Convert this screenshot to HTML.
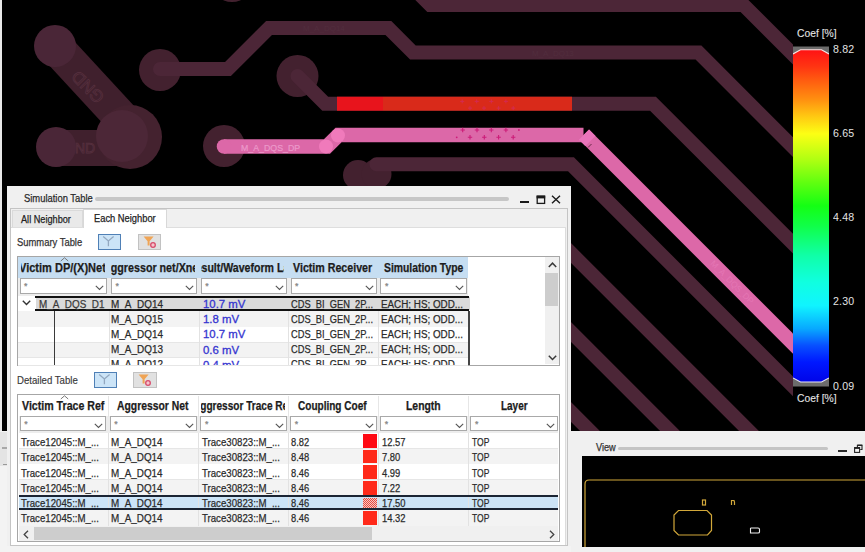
<!DOCTYPE html>
<html><head><meta charset="utf-8">
<style>
*{box-sizing:border-box;margin:0;padding:0}
html,body{width:865px;height:552px;overflow:hidden;background:#000}
body{position:relative;font-family:"Liberation Sans",sans-serif;color:#2a2a2a}
.a{position:absolute}
svg{position:absolute;left:0;top:0}
.t{line-height:1;white-space:nowrap;transform-origin:0 0;-webkit-text-stroke:0.25px currentColor}
.cb{color:#e4e4e4}
.hd{font-weight:bold;color:#1c1c1c}
.clip{position:absolute;overflow:hidden}
</style></head><body>
<svg width="865" height="552" viewBox="0 0 865 552">
<defs><clipPath id="pc"><rect x="0" y="0" width="793" height="431"/></clipPath></defs>
<g clip-path="url(#pc)">
 <g fill="none" stroke="#40202d">
  <path d="M55 46 L127 124" stroke-width="35"/>
  <path d="M56 148 L129 148" stroke-width="36"/>
 </g>
 <text x="64" y="153" font-family="Liberation Sans" font-size="14" fill="none" stroke="#57303f" stroke-width="0.75">GND</text>
 <circle cx="130" cy="137" r="32" fill="#44222f"/>
 <circle cx="122" cy="136" r="26" fill="#4c2737"/>
 <g fill="#4a2637">
  <circle cx="55" cy="46" r="21"/>
  <circle cx="56" cy="147" r="20"/>
 </g>
 <g fill="#43212f">
  <circle cx="232" cy="-19" r="21"/>
  <circle cx="160" cy="70" r="21"/>
  <circle cx="224" cy="146" r="21"/>
  <circle cx="297.5" cy="76" r="21"/>
  <circle cx="358" cy="175" r="15"/>
  <circle cx="376.5" cy="174" r="15"/>
 </g>
 <g fill="none" stroke="#4c2637" stroke-width="14" stroke-linejoin="miter" stroke-miterlimit="10" stroke-linecap="round">
  <path d="M400 -25.2 L430.2 5 L743.5 5 L900 161.5"/>
  <path d="M160 69 L228 69 L269 28 L388.4 28 L413 52.6 L698.5 52.6 L900 254"/>
  <path d="M297.5 76 L325.2 103.7 L653 103.7 L900 350.7"/>
  <path d="M376.5 164.3 L571 164.3 L900 493.3"/>
  <path d="M540 222 L570 252 L900 582"/>
  <path d="M540 301 L570 331 L900 661"/>
  <path d="M540 381 L570 411 L900 741"/>
 </g>
 <rect x="337" y="96.7" width="46" height="14" fill="#e8141c"/>
 <rect x="383" y="96.7" width="189" height="14" fill="#d92a1a"/>
 <path d="M224 146.5 L327 146.5 L338.5 135 L583.5 135" fill="none" stroke="#dc68a8" stroke-width="14.5" stroke-linejoin="miter"/>
 <circle cx="224" cy="146.5" r="7.25" fill="#dc68a8"/>
 <path d="M584 134.6 L900 450.6" fill="none" stroke="#dc68a8" stroke-width="14.2"/>
 <polygon points="578.9,139.7 589.1,129.5 595.5,135.9 585.3,146.1" fill="#ea74bb"/>
 <path d="M588 147.5 L591.5 144" stroke="#6a2a48" stroke-width="1"/>
<path d="M460.2 101.4 H464.2 M462.2 99.4 V103.4" stroke="#d42a50" stroke-width="1.0"/>
 <path d="M474.7 101.4 H478.7 M476.7 99.4 V103.4" stroke="#d42a50" stroke-width="1.0"/>
 <path d="M489.3 101.4 H493.3 M491.3 99.4 V103.4" stroke="#d42a50" stroke-width="1.0"/>
 <path d="M503.9 101.4 H507.9 M505.9 99.4 V103.4" stroke="#d42a50" stroke-width="1.0"/>
 <path d="M468 108.1 H472 M470 106.1 V110.1" stroke="#d42a50" stroke-width="1.0"/>
 <path d="M482 108.1 H486 M484 106.1 V110.1" stroke="#d42a50" stroke-width="1.0"/>
 <path d="M496.6 108.1 H500.6 M498.6 106.1 V110.1" stroke="#d42a50" stroke-width="1.0"/>
 <path d="M511.20000000000005 108.1 H515.2 M513.2 106.1 V110.1" stroke="#d42a50" stroke-width="1.0"/>
 <path d="M460.5 130 H464.9 M462.7 127.8 V132.2" stroke="#cc1c78" stroke-width="1.1"/>
 <path d="M474.8 130 H479.2 M477 127.8 V132.2" stroke="#cc1c78" stroke-width="1.1"/>
 <path d="M489.1 130 H493.5 M491.3 127.8 V132.2" stroke="#cc1c78" stroke-width="1.1"/>
 <path d="M503.7 130 H508.09999999999997 M505.9 127.8 V132.2" stroke="#cc1c78" stroke-width="1.1"/>
 <path d="M467.8 137.3 H472.2 M470 135.10000000000002 V139.5" stroke="#cc1c78" stroke-width="1.1"/>
 <path d="M482.1 137.3 H486.5 M484.3 135.10000000000002 V139.5" stroke="#cc1c78" stroke-width="1.1"/>
 <path d="M496.40000000000003 137.3 H500.8 M498.6 135.10000000000002 V139.5" stroke="#cc1c78" stroke-width="1.1"/>
 <path d="M511.00000000000006 137.3 H515.4000000000001 M513.2 135.10000000000002 V139.5" stroke="#cc1c78" stroke-width="1.1"/>
 <circle cx="518.9" cy="130" r="0.9" fill="#cc1c78"/><circle cx="456.7" cy="137.3" r="0.9" fill="#cc1c78"/>
 <circle cx="326" cy="146.5" r="7" fill="#f07abb"/>
 <circle cx="338" cy="135.5" r="7" fill="#f07abb"/>
<g fill="none" stroke="#57303f" stroke-width="0.75" font-family="Liberation Sans" font-size="15">
  <text x="0" y="0" transform="translate(77 68) rotate(45) scale(-1 -1) translate(-40 0)" font-size="17">GND</text>
 </g>
 <text x="0" y="3" transform="translate(712 262) rotate(45)" font-family="Liberation Sans" font-size="8.5" fill="#f088c4" opacity="0.45">M_A_DQS_DP</text>
 <text x="241" y="151" font-family="Liberation Sans" font-size="8.8" fill="#f2a8d6" opacity="0.75" stroke="#f2a8d6" stroke-width="0.2">M_A_DQS_DP</text>
 <text x="303" y="31" font-family="Liberation Sans" font-size="8" fill="#512d3d">M_A_DQ14</text>
 <text x="532" y="56" font-family="Liberation Sans" font-size="8" fill="#512d3d">M_A_DQ13</text>
</g>
</svg>
<div class="a" style="left:0.00px;top:0.00px;width:2.00px;height:431.00px;background:#e8e8e8"></div>
<svg class="a" style="left:793px;top:46px" width="36" height="341"><defs><linearGradient id="cg" x1="0" y1="0" x2="0" y2="1"><stop offset="0" stop-color="#ff1214"/><stop offset="0.05" stop-color="#ff3412"/><stop offset="0.09" stop-color="#ff5a10"/><stop offset="0.15" stop-color="#ff9010"/><stop offset="0.20" stop-color="#ffc812"/><stop offset="0.253" stop-color="#fcff14"/><stop offset="0.33" stop-color="#b0ff12"/><stop offset="0.40" stop-color="#60ff10"/><stop offset="0.47" stop-color="#14ff14"/><stop offset="0.53" stop-color="#10ff48"/><stop offset="0.62" stop-color="#10ffa8"/><stop offset="0.70" stop-color="#10ffe0"/><stop offset="0.77" stop-color="#10f4ff"/><stop offset="0.84" stop-color="#08a8ff"/><stop offset="0.89" stop-color="#0850ff"/><stop offset="0.94" stop-color="#0018ff"/><stop offset="1" stop-color="#0004e8"/></linearGradient></defs><rect x="0" y="0.5" width="36" height="340" fill="#6c6c6c"/><polygon points="0,8 7.5,3.8 28.5,3.8 36,8 36,332 28.5,336 7.5,336 0,332" fill="url(#cg)"/><polyline points="0,8 7.5,3.8 28.5,3.8 36,8" fill="none" stroke="#f4e8e8" stroke-width="1.1"/><polyline points="0,332 7.5,336 28.5,336 36,332" fill="none" stroke="#e8e8f4" stroke-width="1.1"/></svg>
<div class="a t" style="left:797.40px;top:28.04px;font-size:11.05px;transform:scaleX(0.9348);color:#e4e4e4;-webkit-text-stroke:0.1px #e4e4e4">Coef [%]</div>
<div class="a t" style="left:832.70px;top:44.74px;font-size:10.47px;transform:scaleX(1.0114);color:#e4e4e4;letter-spacing:0.15px;-webkit-text-stroke:0">8.82</div>
<div class="a t" style="left:832.70px;top:129.24px;font-size:10.47px;transform:scaleX(1.0114);color:#e4e4e4;letter-spacing:0.15px;-webkit-text-stroke:0">6.65</div>
<div class="a t" style="left:832.70px;top:212.74px;font-size:10.47px;transform:scaleX(1.0114);color:#e4e4e4;letter-spacing:0.15px;-webkit-text-stroke:0">4.48</div>
<div class="a t" style="left:832.70px;top:297.24px;font-size:10.47px;transform:scaleX(1.0114);color:#e4e4e4;letter-spacing:0.15px;-webkit-text-stroke:0">2.30</div>
<div class="a t" style="left:832.70px;top:382.24px;font-size:10.47px;transform:scaleX(1.0114);color:#e4e4e4;letter-spacing:0.15px;-webkit-text-stroke:0">0.09</div>
<div class="a t" style="left:797.00px;top:393.14px;font-size:11.05px;transform:scaleX(0.9348);color:#e4e4e4;-webkit-text-stroke:0.1px #e4e4e4">Coef [%]</div>
<div class="a" style="left:0.00px;top:431.00px;width:571.00px;height:121.00px;background:#f3f3f3"></div>
<div class="a" style="left:0.00px;top:432.00px;width:7.00px;height:33.50px;background:#e4e4e4"></div>
<div class="a" style="left:2.00px;top:447.30px;width:5.00px;height:2.00px;background:#a8a8a8"></div>
<div class="a" style="left:3.00px;top:464.30px;width:4.00px;height:1.20px;background:#999"></div>
<div class="a" style="left:7.00px;top:186.00px;width:564.00px;height:360.00px;background:#f0f0f0"></div>
<div class="a t" style="left:23.90px;top:193.07px;font-size:10.90px;transform:scaleX(0.8635);color:#2a2a2a">Simulation Table</div>
<div class="a" style="left:95.00px;top:197.00px;width:414.00px;height:4.00px;background:#c6c6c6;border-radius:2px"></div>
<div class="a" style="left:520.00px;top:201.30px;width:8.50px;height:1.80px;background:#1a1a1a"></div>
<svg class="a" style="left:535.5px;top:194.5px" width="10" height="10"><rect x="1.2" y="1.2" width="7.4" height="7.2" fill="none" stroke="#1a1a1a" stroke-width="1.3"/><rect x="0.6" y="0.6" width="8.6" height="2.8" fill="#1a1a1a"/></svg>
<svg class="a" style="left:551px;top:194.5px" width="10" height="9"><path d="M1 0.8 L9 8.2 M9 0.8 L1 8.2" stroke="#1a1a1a" stroke-width="1.4"/></svg>
<div class="a" style="left:10.00px;top:207.50px;width:558.00px;height:338.50px;border:1px solid #c4c4c4;background:#f0f0f0"></div>
<div class="a" style="left:11.00px;top:226.50px;width:554.50px;height:318.50px;background:#fff;border-top:1px solid #dedede;border-right:1px solid #dcdcdc"></div>
<div class="a" style="left:11.50px;top:209.50px;width:71.00px;height:17.50px;background:#e9e9e9;border:1px solid #dadada;border-bottom:none"></div>
<div class="a" style="left:82.50px;top:208.50px;width:84.00px;height:19.00px;background:#fff;border:1px solid #d8d8d8;border-bottom:none"></div>
<div class="a t" style="left:21.40px;top:213.81px;font-size:10.61px;transform:scaleX(0.8633);color:#222">All Neighbor</div>
<div class="a t" style="left:94.00px;top:212.81px;font-size:10.61px;transform:scaleX(0.8790);color:#222">Each Neighbor</div>
<div class="a t" style="left:16.70px;top:237.01px;font-size:10.61px;transform:scaleX(0.8868);color:#333">Summary Table</div>
<div class="a" style="left:97.90px;top:233.70px;width:23.40px;height:16.00px;background:#cce4f7;border:1.6px solid #4f80b6"></div>
<svg class="a" style="left:97.9px;top:233.7px" width="24" height="16"><path d="M5.2 2.6 L10.4 7 L15.6 2.6 M10.4 7 V12.2" fill="none" stroke="#93a8c0" stroke-width="1.3"/></svg>
<div class="a" style="left:137.60px;top:233.70px;width:23.40px;height:16.00px;background:#e1e1e1;border:1px solid #c2c2c2"></div>
<svg class="a" style="left:137.6px;top:233.7px" width="24" height="16"><path d="M5.6 2.4 L15.6 2.4 L11.6 7.2 L11.6 11.6 L9.6 11.6 L9.6 7.2 Z" fill="#efa455"/><circle cx="15" cy="11" r="2.3" fill="#f4c4cc" stroke="#d84a6a" stroke-width="1.3"/></svg>
<div class="a" style="left:17.00px;top:256.00px;width:542.50px;height:110.00px;border:1px solid #a6a6a6;background:#fff"></div>
<div class="a" style="left:18.30px;top:257.20px;width:449.90px;height:21.00px;background:#c6def2"></div>
<div class="a" style="left:18.30px;top:278.20px;width:449.90px;height:18.00px;background:#ededed"></div>
<div class="clip" style="left:21px;top:0;width:83.7px;height:552px"><div class="a t hd" style="left:-2.47px;top:261.98px;font-size:12.06px;transform:scaleX(0.9155)">Victim DP/(X)Net</div></div>
<div class="clip" style="left:110.5px;top:0;width:84.1px;height:552px"><div class="a t hd" style="left:-7.45px;top:261.98px;font-size:12.06px;transform:scaleX(0.8896)">Aggressor net/Xnet</div></div>
<div class="clip" style="left:200.5px;top:0;width:83.39999999999998px;height:552px"><div class="a t hd" style="left:-12.64px;top:261.98px;font-size:12.06px;transform:scaleX(0.8780)">Result/Waveform Label</div></div>
<div class="clip" style="left:289px;top:0;width:88px;height:552px"><div class="a t hd" style="left:4.00px;top:261.98px;font-size:12.06px;transform:scaleX(0.8846)">Victim Receiver</div></div>
<div class="clip" style="left:379px;top:0;width:88px;height:552px"><div class="a t hd" style="left:4.90px;top:261.98px;font-size:12.06px;transform:scaleX(0.8604)">Simulation Type</div></div>
<svg class="a" style="left:59.5px;top:257px" width="9" height="5"><path d="M0.8 4 L4.5 0.8 L8.2 4" fill="none" stroke="#777" stroke-width="1"/></svg>
<div class="a" style="left:19.50px;top:278.40px;width:87.90px;height:15.30px;background:#fff;border:1px solid #a9a9a9"></div>
<div class="a t" style="left:24.00px;top:282.01px;font-size:8.72px;transform:scaleX(1.0000);color:#888">*</div>
<svg class="a" style="left:95.4px;top:285.2px" width="9" height="6"><path d="M0.8 0.8 L4.5 4.5 L8.2 0.8" fill="none" stroke="#555" stroke-width="1.1"/></svg>
<div class="a" style="left:110.90px;top:278.40px;width:86.30px;height:15.30px;background:#fff;border:1px solid #a9a9a9"></div>
<div class="a t" style="left:115.40px;top:282.01px;font-size:8.72px;transform:scaleX(1.0000);color:#888">*</div>
<svg class="a" style="left:185.2px;top:285.2px" width="9" height="6"><path d="M0.8 0.8 L4.5 4.5 L8.2 0.8" fill="none" stroke="#555" stroke-width="1.1"/></svg>
<div class="a" style="left:200.70px;top:278.40px;width:86.30px;height:15.30px;background:#fff;border:1px solid #a9a9a9"></div>
<div class="a t" style="left:205.20px;top:282.01px;font-size:8.72px;transform:scaleX(1.0000);color:#888">*</div>
<svg class="a" style="left:275.0px;top:285.2px" width="9" height="6"><path d="M0.8 0.8 L4.5 4.5 L8.2 0.8" fill="none" stroke="#555" stroke-width="1.1"/></svg>
<div class="a" style="left:290.50px;top:278.40px;width:86.40px;height:15.30px;background:#fff;border:1px solid #a9a9a9"></div>
<div class="a t" style="left:295.00px;top:282.01px;font-size:8.72px;transform:scaleX(1.0000);color:#888">*</div>
<svg class="a" style="left:364.9px;top:285.2px" width="9" height="6"><path d="M0.8 0.8 L4.5 4.5 L8.2 0.8" fill="none" stroke="#555" stroke-width="1.1"/></svg>
<div class="a" style="left:380.40px;top:278.40px;width:86.50px;height:15.30px;background:#fff;border:1px solid #a9a9a9"></div>
<div class="a t" style="left:384.90px;top:282.01px;font-size:8.72px;transform:scaleX(1.0000);color:#888">*</div>
<svg class="a" style="left:454.9px;top:285.2px" width="9" height="6"><path d="M0.8 0.8 L4.5 4.5 L8.2 0.8" fill="none" stroke="#555" stroke-width="1.1"/></svg>
<div class="a" style="left:18.30px;top:311.00px;width:449.90px;height:16.40px;background:#f3f3f3"></div>
<div class="a" style="left:18.30px;top:326.90px;width:449.90px;height:1.00px;background:#e6e6e6"></div>
<div class="a" style="left:18.30px;top:327.40px;width:449.90px;height:15.10px;background:#fff"></div>
<div class="a" style="left:18.30px;top:342.00px;width:449.90px;height:1.00px;background:#e6e6e6"></div>
<div class="a" style="left:18.30px;top:342.50px;width:449.90px;height:15.00px;background:#f3f3f3"></div>
<div class="a" style="left:18.30px;top:357.00px;width:449.90px;height:1.00px;background:#e6e6e6"></div>
<div class="a" style="left:18.30px;top:357.50px;width:449.90px;height:7.50px;background:#fff"></div>
<div class="a" style="left:18.30px;top:364.50px;width:449.90px;height:1.00px;background:#e6e6e6"></div>
<div class="a" style="left:108.70px;top:311.00px;width:1.00px;height:54.00px;background:#e2e2e2"></div>
<div class="a" style="left:198.50px;top:311.00px;width:1.00px;height:54.00px;background:#e2e2e2"></div>
<div class="a" style="left:288.30px;top:311.00px;width:1.00px;height:54.00px;background:#e2e2e2"></div>
<div class="a" style="left:378.20px;top:311.00px;width:1.00px;height:54.00px;background:#e2e2e2"></div>
<div class="a" style="left:35.50px;top:297.00px;width:434.00px;height:13.00px;background:#dadada"></div>
<div class="a" style="left:35.00px;top:296.30px;width:434.00px;height:1.80px;background:#111"></div>
<div class="a" style="left:35.00px;top:309.20px;width:434.00px;height:2.00px;background:#111"></div>
<div class="a" style="left:53.60px;top:311.00px;width:1.30px;height:54.00px;background:#3a3a3a"></div>
<div class="a" style="left:468.40px;top:311.00px;width:1.30px;height:54.00px;background:#454545"></div>
<svg class="a" style="left:22px;top:299.5px" width="9" height="6"><path d="M0.8 0.8 L4.5 4.5 L8.2 0.8" fill="none" stroke="#333" stroke-width="1.4"/></svg>
<div class="clip" style="left:18px;top:296px;width:527px;height:69px">
<div class="a t" style="left:20.80px;top:2.35px;font-size:11.63px;transform:scaleX(0.8517);color:#3a3a3a">M_A_DQS_D1</div>
<div class="a t" style="left:93.00px;top:1.75px;font-size:11.63px;transform:scaleX(0.8559);">M_A_DQ14</div>
<div class="a t" style="left:184.50px;top:2.25px;font-size:11.63px;transform:scaleX(0.9791);color:#3535d0;-webkit-text-stroke:0.3px #3535d0">10.7 mV</div>
<div class="a t" style="left:273.40px;top:1.75px;font-size:11.63px;transform:scaleX(0.7996);">CDS_BI_GEN_2P...</div>
<div class="a t" style="left:363.40px;top:1.75px;font-size:11.63px;transform:scaleX(0.8461);">EACH; HS; ODD...</div>
<div class="a t" style="left:93.00px;top:16.85px;font-size:11.63px;transform:scaleX(0.8559);">M_A_DQ15</div>
<div class="a t" style="left:184.50px;top:17.35px;font-size:11.63px;transform:scaleX(0.9827);color:#3535d0;-webkit-text-stroke:0.3px #3535d0">1.8 mV</div>
<div class="a t" style="left:273.40px;top:16.85px;font-size:11.63px;transform:scaleX(0.7996);">CDS_BI_GEN_2P...</div>
<div class="a t" style="left:363.40px;top:16.85px;font-size:11.63px;transform:scaleX(0.8461);">EACH; HS; ODD...</div>
<div class="a t" style="left:93.00px;top:31.95px;font-size:11.63px;transform:scaleX(0.8559);">M_A_DQ14</div>
<div class="a t" style="left:184.50px;top:32.45px;font-size:11.63px;transform:scaleX(0.9791);color:#3535d0;-webkit-text-stroke:0.3px #3535d0">10.7 mV</div>
<div class="a t" style="left:273.40px;top:31.95px;font-size:11.63px;transform:scaleX(0.7996);">CDS_BI_GEN_2P...</div>
<div class="a t" style="left:363.40px;top:31.95px;font-size:11.63px;transform:scaleX(0.8461);">EACH; HS; ODD...</div>
<div class="a t" style="left:93.00px;top:47.05px;font-size:11.63px;transform:scaleX(0.8559);">M_A_DQ13</div>
<div class="a t" style="left:184.50px;top:47.55px;font-size:11.63px;transform:scaleX(0.9827);color:#3535d0;-webkit-text-stroke:0.3px #3535d0">0.6 mV</div>
<div class="a t" style="left:273.40px;top:47.05px;font-size:11.63px;transform:scaleX(0.7996);">CDS_BI_GEN_2P...</div>
<div class="a t" style="left:363.40px;top:47.05px;font-size:11.63px;transform:scaleX(0.8461);">EACH; HS; ODD...</div>
<div class="a t" style="left:93.00px;top:62.15px;font-size:11.63px;transform:scaleX(0.8559);">M_A_DQ12</div>
<div class="a t" style="left:184.50px;top:62.65px;font-size:11.63px;transform:scaleX(0.9827);color:#3535d0;-webkit-text-stroke:0.3px #3535d0">0.4 mV</div>
<div class="a t" style="left:273.40px;top:62.15px;font-size:11.63px;transform:scaleX(0.7996);">CDS_BI_GEN_2P...</div>
<div class="a t" style="left:363.40px;top:62.15px;font-size:11.63px;transform:scaleX(0.8461);">EACH; HS; ODD...</div>
</div>
<div class="a" style="left:544.50px;top:257.20px;width:14.50px;height:107.30px;background:#f0f0f0"></div>
<div class="a" style="left:545.00px;top:272.80px;width:12.50px;height:33.00px;background:#cdcdcd"></div>
<svg class="a" style="left:547.5px;top:262px" width="9" height="6"><path d="M0.8 5 L4.5 1.2 L8.2 5" fill="none" stroke="#3a3a3a" stroke-width="1.5"/></svg>
<svg class="a" style="left:547.5px;top:355px" width="9" height="6"><path d="M0.8 0.8 L4.5 4.5 L8.2 0.8" fill="none" stroke="#3a3a3a" stroke-width="1.5"/></svg>
<div class="a t" style="left:16.70px;top:376.14px;font-size:10.47px;transform:scaleX(0.9193);color:#3a3a3a;-webkit-text-stroke:0.15px #3a3a3a">Detailed Table</div>
<div class="a" style="left:93.50px;top:371.90px;width:23.40px;height:16.00px;background:#cce4f7;border:1.6px solid #4f80b6"></div>
<svg class="a" style="left:93.5px;top:371.9px" width="24" height="16"><path d="M5.2 2.6 L10.4 7 L15.6 2.6 M10.4 7 V12.2" fill="none" stroke="#93a8c0" stroke-width="1.3"/></svg>
<div class="a" style="left:133.40px;top:371.90px;width:23.40px;height:16.00px;background:#e1e1e1;border:1px solid #c2c2c2"></div>
<svg class="a" style="left:133.4px;top:371.9px" width="24" height="16"><path d="M5.6 2.4 L15.6 2.4 L11.6 7.2 L11.6 11.6 L9.6 11.6 L9.6 7.2 Z" fill="#efa455"/><circle cx="15" cy="11" r="2.3" fill="#f4c4cc" stroke="#d84a6a" stroke-width="1.3"/></svg>
<div class="a" style="left:17.00px;top:394.00px;width:542.50px;height:148.00px;border:1px solid #a6a6a6;background:#fff"></div>
<div class="a" style="left:18.50px;top:416.00px;width:539.80px;height:17.00px;background:#ededed"></div>
<div class="clip" style="left:18.5px;top:0;width:88.5px;height:552px"><div class="a t hd" style="left:3.20px;top:400.08px;font-size:12.06px;transform:scaleX(0.8809)">Victim Trace Ref</div></div>
<div class="clip" style="left:108px;top:0;width:90px;height:552px"><div class="a t hd" style="left:8.80px;top:400.08px;font-size:12.06px;transform:scaleX(0.8613)">Aggressor Net</div></div>
<div class="clip" style="left:201px;top:0;width:84.19999999999999px;height:552px"><div class="a t hd" style="left:-8.45px;top:400.08px;font-size:12.06px;transform:scaleX(0.8366)">Aggressor Trace Ref</div></div>
<div class="clip" style="left:289px;top:0;width:89px;height:552px"><div class="a t hd" style="left:9.30px;top:400.08px;font-size:12.06px;transform:scaleX(0.8335)">Coupling Coef</div></div>
<div class="clip" style="left:379px;top:0;width:89px;height:552px"><div class="a t hd" style="left:26.80px;top:400.08px;font-size:12.06px;transform:scaleX(0.8631)">Length</div></div>
<div class="clip" style="left:469px;top:0;width:89px;height:552px"><div class="a t hd" style="left:31.60px;top:400.08px;font-size:12.06px;transform:scaleX(0.8263)">Layer</div></div>
<div class="a" style="left:107.50px;top:395.50px;width:1.00px;height:21.00px;background:#e6e6e6"></div>
<div class="a" style="left:198.20px;top:395.50px;width:1.00px;height:21.00px;background:#e6e6e6"></div>
<div class="a" style="left:288.00px;top:395.50px;width:1.00px;height:21.00px;background:#e6e6e6"></div>
<div class="a" style="left:378.00px;top:395.50px;width:1.00px;height:21.00px;background:#e6e6e6"></div>
<div class="a" style="left:468.20px;top:395.50px;width:1.00px;height:21.00px;background:#e6e6e6"></div>
<svg class="a" style="left:59.5px;top:394.8px" width="9" height="5"><path d="M0.8 4 L4.5 0.8 L8.2 4" fill="none" stroke="#777" stroke-width="1"/></svg>
<div class="a" style="left:19.70px;top:416.40px;width:86.50px;height:14.90px;background:#fff;border:1px solid #a9a9a9"></div>
<div class="a t" style="left:24.20px;top:420.01px;font-size:8.72px;transform:scaleX(1.0000);color:#888">*</div>
<svg class="a" style="left:94.2px;top:423.2px" width="9" height="6"><path d="M0.8 0.8 L4.5 4.5 L8.2 0.8" fill="none" stroke="#555" stroke-width="1.1"/></svg>
<div class="a" style="left:109.70px;top:416.40px;width:87.20px;height:14.90px;background:#fff;border:1px solid #a9a9a9"></div>
<div class="a t" style="left:114.20px;top:420.01px;font-size:8.72px;transform:scaleX(1.0000);color:#888">*</div>
<svg class="a" style="left:184.89999999999998px;top:423.2px" width="9" height="6"><path d="M0.8 0.8 L4.5 4.5 L8.2 0.8" fill="none" stroke="#555" stroke-width="1.1"/></svg>
<div class="a" style="left:200.40px;top:416.40px;width:86.30px;height:14.90px;background:#fff;border:1px solid #a9a9a9"></div>
<div class="a t" style="left:204.90px;top:420.01px;font-size:8.72px;transform:scaleX(1.0000);color:#888">*</div>
<svg class="a" style="left:274.7px;top:423.2px" width="9" height="6"><path d="M0.8 0.8 L4.5 4.5 L8.2 0.8" fill="none" stroke="#555" stroke-width="1.1"/></svg>
<div class="a" style="left:290.20px;top:416.40px;width:86.50px;height:14.90px;background:#fff;border:1px solid #a9a9a9"></div>
<div class="a t" style="left:294.70px;top:420.01px;font-size:8.72px;transform:scaleX(1.0000);color:#888">*</div>
<svg class="a" style="left:364.7px;top:423.2px" width="9" height="6"><path d="M0.8 0.8 L4.5 4.5 L8.2 0.8" fill="none" stroke="#555" stroke-width="1.1"/></svg>
<div class="a" style="left:380.20px;top:416.40px;width:86.70px;height:14.90px;background:#fff;border:1px solid #a9a9a9"></div>
<div class="a t" style="left:384.70px;top:420.01px;font-size:8.72px;transform:scaleX(1.0000);color:#888">*</div>
<svg class="a" style="left:454.9px;top:423.2px" width="9" height="6"><path d="M0.8 0.8 L4.5 4.5 L8.2 0.8" fill="none" stroke="#555" stroke-width="1.1"/></svg>
<div class="a" style="left:470.40px;top:416.40px;width:87.60px;height:14.90px;background:#fff;border:1px solid #a9a9a9"></div>
<div class="a t" style="left:474.90px;top:420.01px;font-size:8.72px;transform:scaleX(1.0000);color:#888">*</div>
<svg class="a" style="left:546.0px;top:423.2px" width="9" height="6"><path d="M0.8 0.8 L4.5 4.5 L8.2 0.8" fill="none" stroke="#555" stroke-width="1.1"/></svg>
<div class="a" style="left:18.50px;top:433.00px;width:539.80px;height:15.60px;background:#fff"></div>
<div class="a" style="left:18.50px;top:448.10px;width:539.80px;height:1.00px;background:#e6e6e6"></div>
<div class="a" style="left:18.50px;top:448.60px;width:539.80px;height:15.50px;background:#f3f3f3"></div>
<div class="a" style="left:18.50px;top:463.60px;width:539.80px;height:1.00px;background:#e6e6e6"></div>
<div class="a" style="left:18.50px;top:464.10px;width:539.80px;height:15.60px;background:#fff"></div>
<div class="a" style="left:18.50px;top:479.20px;width:539.80px;height:1.00px;background:#e6e6e6"></div>
<div class="a" style="left:18.50px;top:479.70px;width:539.80px;height:15.90px;background:#f3f3f3"></div>
<div class="a" style="left:18.50px;top:495.10px;width:539.80px;height:1.00px;background:#e6e6e6"></div>
<div class="a" style="left:18.50px;top:495.60px;width:539.80px;height:13.90px;background:#cce4f7"></div>
<div class="a" style="left:18.50px;top:509.00px;width:539.80px;height:1.00px;background:#e6e6e6"></div>
<div class="a" style="left:18.50px;top:509.50px;width:539.80px;height:16.50px;background:#f3f3f3"></div>
<div class="a" style="left:18.50px;top:525.50px;width:539.80px;height:1.00px;background:#e6e6e6"></div>
<div class="a" style="left:107.50px;top:433.00px;width:1.00px;height:93.00px;background:#e2e2e2"></div>
<div class="a" style="left:198.20px;top:433.00px;width:1.00px;height:93.00px;background:#e2e2e2"></div>
<div class="a" style="left:288.00px;top:433.00px;width:1.00px;height:93.00px;background:#e2e2e2"></div>
<div class="a" style="left:378.00px;top:433.00px;width:1.00px;height:93.00px;background:#e2e2e2"></div>
<div class="a" style="left:468.20px;top:433.00px;width:1.00px;height:93.00px;background:#e2e2e2"></div>
<div class="a" style="left:18.50px;top:495.00px;width:539.80px;height:2.00px;background:#1a2433"></div>
<div class="a" style="left:18.50px;top:508.30px;width:539.80px;height:2.00px;background:#1a2433"></div>
<div class="a t" style="left:21.40px;top:435.63px;font-size:11.77px;transform:scaleX(0.8201);">Trace12045::M_...</div>
<div class="a t" style="left:111.20px;top:435.63px;font-size:11.77px;transform:scaleX(0.8389);">M_A_DQ14</div>
<div class="a t" style="left:201.80px;top:435.63px;font-size:11.77px;transform:scaleX(0.8201);">Trace30823::M_...</div>
<div class="a t" style="left:291.20px;top:435.63px;font-size:11.77px;transform:scaleX(0.7943);">8.82</div>
<div class="a t" style="left:381.70px;top:435.63px;font-size:11.77px;transform:scaleX(0.7976);">12.57</div>
<div class="a t" style="left:472.10px;top:435.63px;font-size:11.77px;transform:scaleX(0.7211);">TOP</div>
<div class="a" style="left:363.00px;top:434.00px;width:14.30px;height:13.60px;background:#ff0a14"></div>
<div class="a t" style="left:21.40px;top:451.03px;font-size:11.77px;transform:scaleX(0.8201);">Trace12045::M_...</div>
<div class="a t" style="left:111.20px;top:451.03px;font-size:11.77px;transform:scaleX(0.8389);">M_A_DQ14</div>
<div class="a t" style="left:201.80px;top:451.03px;font-size:11.77px;transform:scaleX(0.8201);">Trace30823::M_...</div>
<div class="a t" style="left:291.20px;top:451.03px;font-size:11.77px;transform:scaleX(0.7943);">8.48</div>
<div class="a t" style="left:381.70px;top:451.03px;font-size:11.77px;transform:scaleX(0.7986);">7.80</div>
<div class="a t" style="left:472.10px;top:451.03px;font-size:11.77px;transform:scaleX(0.7211);">TOP</div>
<div class="a" style="left:363.00px;top:449.60px;width:14.30px;height:13.50px;background:#ff2a1a"></div>
<div class="a t" style="left:21.40px;top:466.53px;font-size:11.77px;transform:scaleX(0.8201);">Trace12045::M_...</div>
<div class="a t" style="left:111.20px;top:466.53px;font-size:11.77px;transform:scaleX(0.8389);">M_A_DQ14</div>
<div class="a t" style="left:201.80px;top:466.53px;font-size:11.77px;transform:scaleX(0.8201);">Trace30823::M_...</div>
<div class="a t" style="left:291.20px;top:466.53px;font-size:11.77px;transform:scaleX(0.7943);">8.46</div>
<div class="a t" style="left:381.70px;top:466.53px;font-size:11.77px;transform:scaleX(0.7986);">4.99</div>
<div class="a t" style="left:472.10px;top:466.53px;font-size:11.77px;transform:scaleX(0.7211);">TOP</div>
<div class="a" style="left:363.00px;top:465.10px;width:14.30px;height:13.60px;background:#ff2a1a"></div>
<div class="a t" style="left:21.40px;top:481.73px;font-size:11.77px;transform:scaleX(0.8201);">Trace12045::M_...</div>
<div class="a t" style="left:111.20px;top:481.73px;font-size:11.77px;transform:scaleX(0.8389);">M_A_DQ14</div>
<div class="a t" style="left:201.80px;top:481.73px;font-size:11.77px;transform:scaleX(0.8201);">Trace30823::M_...</div>
<div class="a t" style="left:291.20px;top:481.73px;font-size:11.77px;transform:scaleX(0.7943);">8.46</div>
<div class="a t" style="left:381.70px;top:481.73px;font-size:11.77px;transform:scaleX(0.7986);">7.22</div>
<div class="a t" style="left:472.10px;top:481.73px;font-size:11.77px;transform:scaleX(0.7211);">TOP</div>
<div class="a" style="left:363.00px;top:480.70px;width:14.30px;height:13.90px;background:#ff2a1a"></div>
<div class="a t" style="left:21.40px;top:496.53px;font-size:11.77px;transform:scaleX(0.8201);">Trace12045::M_...</div>
<div class="a t" style="left:111.20px;top:496.53px;font-size:11.77px;transform:scaleX(0.8389);">M_A_DQ14</div>
<div class="a t" style="left:201.80px;top:496.53px;font-size:11.77px;transform:scaleX(0.8201);">Trace30823::M_...</div>
<div class="a t" style="left:291.20px;top:496.53px;font-size:11.77px;transform:scaleX(0.7943);">8.46</div>
<div class="a t" style="left:381.70px;top:496.53px;font-size:11.77px;transform:scaleX(0.7976);">17.50</div>
<div class="a t" style="left:472.10px;top:496.53px;font-size:11.77px;transform:scaleX(0.7211);">TOP</div>
<div class="a" style="left:363.00px;top:498.10px;width:14.30px;height:9.90px;background-color:#fff;background-image:repeating-conic-gradient(#e84a40 0 25%,#f6c8c4 0 50%);background-size:2px 2px"></div>
<div class="a t" style="left:21.40px;top:512.23px;font-size:11.77px;transform:scaleX(0.8201);">Trace12045::M_...</div>
<div class="a t" style="left:111.20px;top:512.23px;font-size:11.77px;transform:scaleX(0.8389);">M_A_DQ14</div>
<div class="a t" style="left:201.80px;top:512.23px;font-size:11.77px;transform:scaleX(0.8201);">Trace30823::M_...</div>
<div class="a t" style="left:291.20px;top:512.23px;font-size:11.77px;transform:scaleX(0.7943);">8.46</div>
<div class="a t" style="left:381.70px;top:512.23px;font-size:11.77px;transform:scaleX(0.7976);">14.32</div>
<div class="a t" style="left:472.10px;top:512.23px;font-size:11.77px;transform:scaleX(0.7211);">TOP</div>
<div class="a" style="left:363.00px;top:510.50px;width:14.30px;height:14.50px;background:#ff2a1a"></div>
<div class="a" style="left:18.50px;top:526.00px;width:539.80px;height:15.00px;background:#f0f0f0"></div>
<div class="a" style="left:33.50px;top:527.00px;width:338.50px;height:13.00px;background:#cdcdcd"></div>
<svg class="a" style="left:23px;top:529.5px" width="6" height="9"><path d="M5 0.8 L1.2 4.5 L5 8.2" fill="none" stroke="#444" stroke-width="1.3"/></svg>
<svg class="a" style="left:548.5px;top:529.5px" width="6" height="9"><path d="M1 0.8 L4.8 4.5 L1 8.2" fill="none" stroke="#444" stroke-width="1.3"/></svg>
<div class="a" style="left:571.00px;top:431.00px;width:294.00px;height:121.00px;background:#f0f0f0"></div>
<div class="a t" style="left:595.80px;top:442.64px;font-size:10.47px;transform:scaleX(0.8757);color:#333">View</div>
<div class="a" style="left:618.30px;top:446.80px;width:209.50px;height:3.50px;background:#c4c4c4;border-radius:2px"></div>
<div class="a" style="left:838.00px;top:450.40px;width:8.50px;height:1.70px;background:#2a2a2a"></div>
<svg class="a" style="left:854px;top:443.5px" width="9" height="9"><path d="M3.4 3 V1.2 H8 V5.5 H6.2" fill="none" stroke="#222" stroke-width="1.1"/><rect x="3.4" y="0.6" width="4.8" height="1.4" fill="#222"/><rect x="0.6" y="3.6" width="5" height="4.8" fill="#f4f4f4" stroke="#222" stroke-width="1.1"/><rect x="0.5" y="3.3" width="5.4" height="1.6" fill="#222"/></svg>
<div class="a" style="left:582.00px;top:456.00px;width:283.00px;height:91.00px;background:#000"></div>
<svg class="a" style="left:582px;top:456px" width="283" height="91"><g fill="none" stroke="#d2a83a" stroke-width="1.2"><path d="M3 91 V28 Q3 24 7 24 H283"/><path d="M96.5 54.5 H125 L129.5 59 V74.5 L125.5 79 H96.5 L92 74.5 V59 Z"/><rect x="120.5" y="44" width="3" height="5"/><path d="M149.5 49 V44.5 H152 L152.5 46 V49"/></g><path d="M168.5 72 H176 Q177.5 72 177.5 73.5 V76 Q177.5 77 176 77 H168.5 V72" fill="none" stroke="#eee" stroke-width="1.1"/></svg>
</body></html>
